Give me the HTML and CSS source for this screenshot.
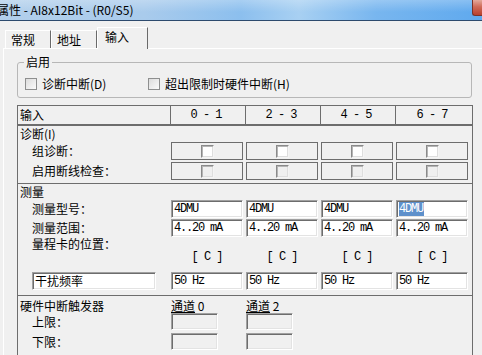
FILE: index.html
```html
<!DOCTYPE html>
<html lang="zh-CN">
<head>
  <meta charset="UTF-8">
  <title>属性 - AI8x12Bit - (R0/S5)</title>
  <link rel="stylesheet" href="styles.css">
</head>
<body>
  <div class="titlebar">
    <span class="title">属性 - AI8x12Bit - (R0/S5)</span>
    <span class="close"></span>
  </div>

  <div class="tabs">
    <div class="tab">常规</div>
    <div class="tab">地址</div>
    <div class="tab active">输入</div>
  </div>

  <div class="panel">
    <fieldset class="group">
      <legend>启用</legend>
      <div class="checks">
        <label class="check"><span class="cb"></span>诊断中断(D)</label>
        <label class="check"><span class="cb"></span>超出限制时硬件中断(H)</label>
      </div>
    </fieldset>

    <div class="grid">
      <div class="head">
        <div class="head-label">输入</div>
        <div class="head-num">0 - 1</div>
        <div class="head-num">2 - 3</div>
        <div class="head-num">4 - 5</div>
        <div class="head-num">6 - 7</div>
      </div>

      <div class="section diag">
        <div class="sect-title">诊断(I)</div>
        <div class="rows">
          <div class="row">
            <div class="label">组诊断：</div>
            <div class="cell"><span class="sunken-cb"></span></div>
            <div class="cell"><span class="sunken-cb"></span></div>
            <div class="cell"><span class="sunken-cb"></span></div>
            <div class="cell"><span class="sunken-cb"></span></div>
          </div>
          <div class="row">
            <div class="label">启用断线检查：</div>
            <div class="cell"><span class="sunken-cb off"></span></div>
            <div class="cell"><span class="sunken-cb off"></span></div>
            <div class="cell"><span class="sunken-cb off"></span></div>
            <div class="cell"><span class="sunken-cb off"></span></div>
          </div>
        </div>
      </div>

      <div class="section measure">
        <div class="sect-title">测量</div>
        <div class="row gap1">
          <div class="label">测量型号：</div>
          <div class="field">4DMU</div>
          <div class="field">4DMU</div>
          <div class="field">4DMU</div>
          <div class="field"><span class="sel">4DMU</span></div>
        </div>
        <div class="row">
          <div class="label">测量范围：</div>
          <div class="field">4..20 mA</div>
          <div class="field">4..20 mA</div>
          <div class="field">4..20 mA</div>
          <div class="field">4..20 mA</div>
        </div>
        <div class="row range-label">
          <div class="label">量程卡的位置：</div>
        </div>
        <div class="row range">
          <div></div>
          <div class="mono">[ C ]</div>
          <div class="mono">[ C ]</div>
          <div class="mono">[ C ]</div>
          <div class="mono">[ C ]</div>
        </div>
        <div class="row freq">
          <div class="label"><div class="field wide">干扰频率</div></div>
          <div class="field">50 Hz</div>
          <div class="field">50 Hz</div>
          <div class="field">50 Hz</div>
          <div class="field">50 Hz</div>
        </div>
      </div>

      <div class="section limits">
        <div class="row title-row">
          <div class="sect-title">硬件中断触发器</div>
          <div><u>通道</u>&nbsp;0</div>
          <div><u>通道</u>&nbsp;2</div>
        </div>
        <div class="row">
          <div class="label">上限：</div>
          <div class="field off"></div>
          <div class="field off"></div>
        </div>
        <div class="row">
          <div class="label">下限：</div>
          <div class="field off"></div>
          <div class="field off"></div>
        </div>
      </div>
    </div>
  </div>
</body>
</html>
```

FILE: styles.css
```css
body {
  margin: 0;
  width: 482px;
  height: 355px;
  overflow: hidden;
  background: #f0f0f0;
  color: #000;
  font-family: "Noto Sans CJK SC", sans-serif;
  font-size: 12px;
  line-height: 14px;
}

/* window caption */
.titlebar {
  height: 20px;
  border-bottom: 1px solid #2d4a6d;
  display: flex;
  justify-content: space-between;
  background:
    linear-gradient(180deg, rgba(255,255,255,0.25) 0%, rgba(255,255,255,0) 60%),
    linear-gradient(90deg, #b2cfeb 0%, #a9cbec 30%, #8cbfee 50%, #a8d0f2 62%, #78b6ef 78%, #5fa9ee 100%);
}
.title {
  margin-left: -3px;
  line-height: 20px;
  font-size: 12px;
}
.close {
  width: 9px;
  height: 15px;
  border-left: 1px solid #7b3329;
  border-bottom: 1px solid #7b3329;
  border-radius: 0 0 0 3px;
  background: linear-gradient(180deg, #e3a99c 0%, #cf6a58 45%, #b8402d 100%);
}

/* tabs */
.tabs {
  display: flex;
  align-items: flex-end;
  height: 21px;
  padding: 6px 0 0 5px;
}
.tab {
  box-sizing: border-box;
  width: 46px;
  height: 18px;
  padding: 2px 0 0 5px;
  border: 1px solid;
  border-color: #fff #6a6a6a transparent #fff;
  border-bottom: none;
}
.tab.active {
  position: relative;
  width: 51px;
  height: 22px;
  margin-bottom: -1px;
  padding: 2px 0 0 7px;
  background: #f0f0f0;
}

.panel {
  margin-left: 3px;
  border-top: 1px solid #fff;
  border-left: 1px solid #fff;
  padding-left: 13px;
}

/* enable group */
.group {
  box-sizing: border-box;
  width: 455px;
  margin: 6px 0 0;
  padding: 8px 0 7px;
  border: 1px solid #b7b7b7;
  border-radius: 3px;
}
.group legend {
  margin-left: 6px;
  padding: 0 2px;
  line-height: 14px;
}
.checks {
  display: flex;
  padding-left: 7px;
}
.check {
  flex: none;
  display: flex;
  align-items: center;
  height: 13px;
  white-space: nowrap;
}
.check:first-child {
  width: 123px;
}
.cb {
  flex: none;
  box-sizing: border-box;
  width: 12px;
  height: 12px;
  margin-right: 5px;
  border: 1px solid #8e8f8f;
  background: linear-gradient(135deg, #dcdcdc, #fbfbfb);
}

/* channel table */
.grid {
  box-sizing: border-box;
  width: 456px;
  margin-top: 7px;
  border: 1px solid #6d6d6d;
  border-bottom: none;
}
.head {
  display: grid;
  grid-template-columns: 152px 75px 75px 75px 1fr;
  height: 18px;
  line-height: 18px;
  border-bottom: 2px solid #6d6d6d;
}
.head-label {
  padding-left: 2px;
}
.head-num {
  border-left: 1px solid #6d6d6d;
  padding-right: 4px;
  text-align: center;
  font-family: "Liberation Mono", monospace;
  letter-spacing: -1px;
}

.section {
  border-bottom: 1px solid #6d6d6d;
}
.sect-title {
  height: 16px;
  line-height: 16px;
  padding-left: 2px;
  white-space: nowrap;
}
.row {
  display: grid;
  grid-template-columns: 150px repeat(4, 72px);
  column-gap: 3px;
  align-items: center;
}
.label {
  padding-left: 14px;
  white-space: nowrap;
}

.diag {
  padding-bottom: 3px;
}
.rows {
  display: flex;
  flex-direction: column;
  gap: 2px;
}
.cell {
  box-sizing: border-box;
  height: 18px;
  border: 1px solid #6d6d6d;
  display: flex;
  align-items: center;
  justify-content: center;
}
.sunken-cb {
  box-sizing: border-box;
  width: 13px;
  height: 13px;
  border: 1px solid;
  border-color: #8a8a8a #f4f4f4 #f4f4f4 #8a8a8a;
  box-shadow: inset 1px 1px 0 #b5b5b5, inset -1px -1px 0 #dedede;
  background: #fff;
}
.sunken-cb.off {
  background: #f0f0f0;
}

.field {
  box-sizing: border-box;
  height: 18px;
  padding-left: 2px;
  border: 1px solid;
  border-color: #a0a0a0 #fff #fff #a0a0a0;
  box-shadow: inset 1px 1px 0 #6d6d6d, inset -1px -1px 0 #e3e3e3;
  background: #fff;
  font-family: "Liberation Mono", monospace;
  letter-spacing: -1.2px;
  line-height: 16px;
  white-space: nowrap;
}
.field.off {
  width: 47px;
  height: 17px;
  background: #f0f0f0;
}
.field.wide {
  width: 124px;
  font-family: "Noto Sans CJK SC", sans-serif;
  letter-spacing: 0;
}
.sel {
  padding-right: 1px;
  background: #5e90cb;
  color: #fff;
}
.mono {
  text-align: center;
  font-family: "Liberation Mono", monospace;
  letter-spacing: -1px;
}

.measure {
  padding-bottom: 5px;
}
.gap1 {
  margin-bottom: 1px;
}
.range-label {
  height: 13px;
}
.range {
  height: 12px;
  margin-bottom: 10px;
}

.limits {
  border-bottom: none;
  padding-bottom: 20px;
}
.limits .row {
  grid-template-columns: 150px 72px 72px;
  margin-bottom: 3px;
}
.limits .title-row {
  height: 15px;
  padding-top: 2px;
  margin-bottom: 0;
}
```
